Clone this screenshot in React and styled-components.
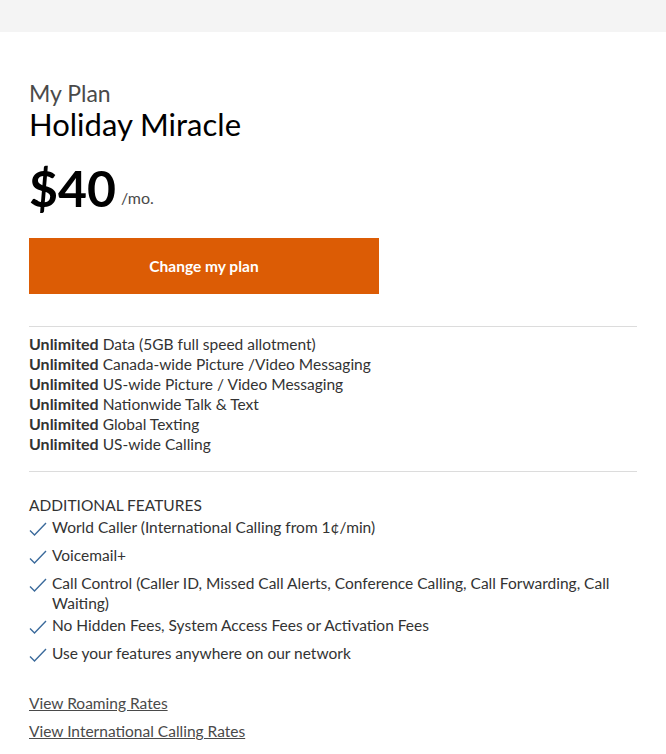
import React from 'react'
import styled, { createGlobalStyle } from 'styled-components'

const GlobalStyle = createGlobalStyle`
    body {
        margin: 0;
        background: #fff;
        font-family: Lato, "Open Sans", sans-serif;
        color: #333;
    }
`

const TopBar = styled.div`
    height: 32px;
    background: #f4f4f4;
`

const Page = styled.main`
    padding: 47px 29px 0;
`

const Eyebrow = styled.div`
    font-size: 23px;
    line-height: 28px;
    color: #4a4a4a;
`

const PlanName = styled.h1`
    margin: 0;
    font-size: 31px;
    line-height: 34px;
    font-weight: 400;
    color: #000;
`

const PriceRow = styled.div`
    display: flex;
    align-items: flex-end;
    gap: 5px;
    margin-top: 19px;
`

const Price = styled.span`
    font-size: 50px;
    line-height: 56px;
    font-weight: 700;
    color: #000;
`

const Per = styled.span`
    font-size: 16px;
    line-height: 20px;
    margin-bottom: 8px;
    color: #4a4a4a;
`

const Button = styled.button`
    display: block;
    width: 350px;
    height: 56px;
    margin-top: 22px;
    border: 0;
    background: #dc5c05;
    color: #fff;
    font-family: Lato, sans-serif;
    font-size: 15.5px;
    font-weight: 700;
    cursor: pointer;
`

const Divider = styled.hr`
    border: 0;
    border-top: 1px solid #dcdcdc;
    margin: ${p => p.top}px 0 ${p => p.bottom}px;
`

const PlanList = styled.ul`
    list-style: none;
    margin: 0;
    padding: 0;
    font-size: 15.5px;
    line-height: 20px;
    li b {
        font-size: 16px;
        font-weight: 700;
    }
`

const SectionTitle = styled.div`
    font-size: 15.5px;
    line-height: 20px;
    text-transform: uppercase;
`

const Features = styled.ul`
    list-style: none;
    margin: 2px 0 0;
    padding: 0;
`

const Feature = styled.li`
    display: flex;
    gap: 5px;
    min-height: 26px;
    font-size: 15.5px;
    line-height: 20px;
    margin-bottom: 2px;
    svg {
        flex: none;
        margin-top: 4px;
    }
`

const Links = styled.div`
    display: flex;
    flex-direction: column;
    align-items: flex-start;
    gap: 8px;
    margin-top: 24px;
    a {
        color: #4a4a4a;
        font-size: 15.5px;
        line-height: 20px;
        text-decoration: underline;
    }
`

const Check = () => (
    <svg width="18" height="16" viewBox="0 0 18 16">
        <path d="M1 9.5 L5.5 14 L17 2" fill="none" stroke="#3b6a9b" strokeWidth="1.4" />
    </svg>
)

const unlimited = [
    'Data (5GB full speed allotment)',
    'Canada-wide Picture /Video Messaging',
    'US-wide Picture / Video Messaging',
    'Nationwide Talk & Text',
    'Global Texting',
    'US-wide Calling',
]

const features = [
    'World Caller (International Calling from 1¢/min)',
    'Voicemail+',
    'Call Control (Caller ID, Missed Call Alerts, Conference Calling, Call Forwarding, Call Waiting)',
    'No Hidden Fees, System Access Fees or Activation Fees',
    'Use your features anywhere on our network',
]

export default function App() {
    return (
        <>
            <GlobalStyle />
            <TopBar />
            <Page>
                <Eyebrow>My Plan</Eyebrow>
                <PlanName>Holiday Miracle</PlanName>
                <PriceRow>
                    <Price>$40</Price>
                    <Per>/mo.</Per>
                </PriceRow>
                <Button>Change my plan</Button>
                <Divider top={32} bottom={7} />
                <PlanList>
                    {unlimited.map(item => (
                        <li key={item}><b>Unlimited</b> {item}</li>
                    ))}
                </PlanList>
                <Divider top={17} bottom={23} />
                <SectionTitle>Additional Features</SectionTitle>
                <Features>
                    {features.map(item => (
                        <Feature key={item}>
                            <Check />
                            <span>{item}</span>
                        </Feature>
                    ))}
                </Features>
                <Links>
                    <a href="#">View Roaming Rates</a>
                    <a href="#">View International Calling Rates</a>
                </Links>
            </Page>
        </>
    )
}
